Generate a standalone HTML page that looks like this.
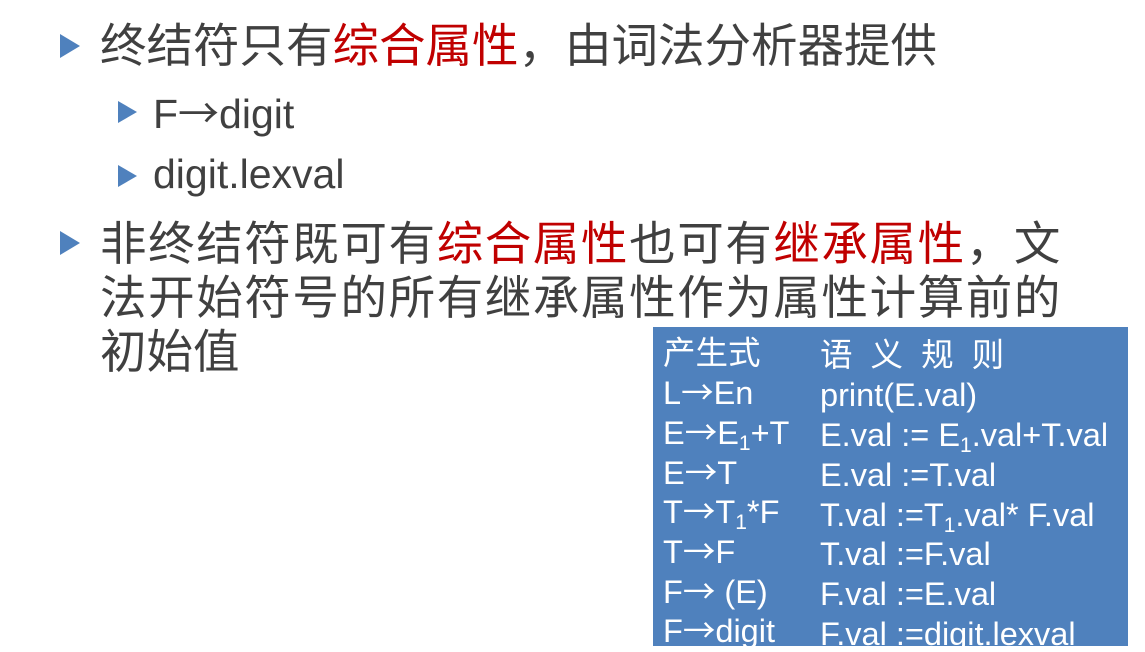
<!DOCTYPE html>
<html><head><meta charset="utf-8"><style>
body{margin:0;width:1145px;height:646px;background:#fff;position:relative;overflow:hidden;font-family:"Liberation Sans","Noto Sans CJK SC",sans-serif;}
.t{position:absolute;white-space:nowrap;color:#404040;}
.m{font-size:46.5px;line-height:54px;}
.s{font-size:41px;line-height:44px;}
.r{color:#c00000;}
.a{font-family:"Noto Sans CJK SC",sans-serif;}
.tri{position:absolute;width:0;height:0;border-top:12px solid transparent;border-bottom:12px solid transparent;border-left:20px solid #4f81bd;}
.tri2{position:absolute;width:0;height:0;border-top:11px solid transparent;border-bottom:11px solid transparent;border-left:19px solid #4f81bd;}
#box{position:absolute;left:653px;top:327px;width:475px;height:319px;background:#4f81bd;}
.c{position:absolute;color:#fff;font-size:32.5px;line-height:36px;white-space:nowrap;}
sub{font-size:21px;vertical-align:-6px;line-height:0;}
</style></head><body>
<div class="tri" style="left:60px;top:34px"></div>
<div class="t m" style="left:100px;top:19px">终结符只有<span class="r">综合属性</span>，由词法分析器提供</div>
<div class="tri2" style="left:118px;top:101px"></div>
<div class="t s" style="left:153px;top:88px">F<span class="a">→</span>digit</div>
<div class="tri2" style="left:118px;top:165px"></div>
<div class="t s" style="left:153px;top:152px">digit.lexval</div>
<div class="tri" style="left:60px;top:231px"></div>
<div class="t m" style="left:100px;top:217px;letter-spacing:1.6px">非终结符既可有<span class="r">综合属性</span>也可有<span class="r">继承属性</span>，文<br>法开始符号的所有继承属性作为属性计算前的</div>
<div class="t m" style="left:100px;top:325px">初始值</div>
<div id="box">
<div class="c" style="left:10px;top:8px">产生式</div><div class="c" style="left:167px;top:10px">语&nbsp;&nbsp;义&nbsp;&nbsp;规&nbsp;&nbsp;则</div>
<div class="c" style="left:10px;top:46px">L<span class="a">→</span>En</div><div class="c" style="left:167px;top:50px">print(E.val)</div>
<div class="c" style="left:10px;top:86px">E<span class="a">→</span>E<sub>1</sub>+T</div><div class="c" style="left:167px;top:90px">E.val := E<sub>1</sub>.val+T.val</div>
<div class="c" style="left:10px;top:126px">E<span class="a">→</span>T</div><div class="c" style="left:167px;top:130px">E.val :=T.val</div>
<div class="c" style="left:10px;top:165px">T<span class="a">→</span>T<sub>1</sub>*F</div><div class="c" style="left:167px;top:170px">T.val :=T<sub>1</sub>.val* F.val</div>
<div class="c" style="left:10px;top:205px">T<span class="a">→</span>F</div><div class="c" style="left:167px;top:209px">T.val :=F.val</div>
<div class="c" style="left:10px;top:245px">F<span class="a">→</span> (E)</div><div class="c" style="left:167px;top:249px">F.val :=E.val</div>
<div class="c" style="left:10px;top:284px">F<span class="a">→</span>digit</div><div class="c" style="left:167px;top:289px">F.val :=digit.lexval</div>
</div>
</body></html>
